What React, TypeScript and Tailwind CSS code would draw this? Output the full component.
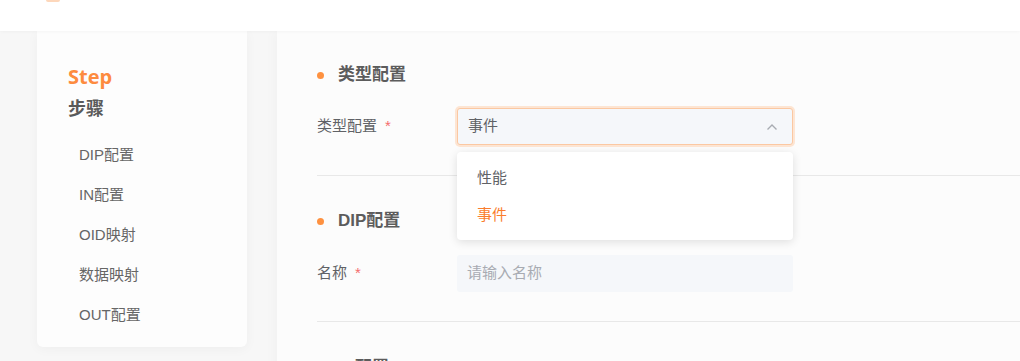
import React from 'react'

const steps = ['DIP配置', 'IN配置', 'OID映射', '数据映射', 'OUT配置']

function SectionTitle({ title }: { title: string }) {
  return (
    <div className="flex h-[22px] items-center gap-[14px]">
      <span className="h-[7px] w-[7px] rounded-full bg-[#fe9140]" />
      <span className="text-[17px] leading-[22px] font-bold text-[#5c5c5c]">{title}</span>
    </div>
  )
}

function FieldLabel({ text }: { text: string }) {
  return (
    <div className="flex w-[140px] items-center text-[15px] text-[#606266]">
      {text}
      <span className="ml-[8px] text-[#f56c6c]">*</span>
    </div>
  )
}

export default function App() {
  return (
    <div
      className="flex h-[361px] w-[1020px] flex-col overflow-hidden bg-[#f7f7f7]"
      style={{ fontFamily: '"Liberation Sans", "Noto Sans CJK SC", sans-serif' }}
    >
      {/* 顶部 */}
      <header className="relative z-10 h-[31px] shrink-0 bg-white pl-[46px] shadow-[0_1px_3px_rgba(0,0,0,0.03)]">
        <div className="h-[2px] w-[14px] rounded-b-full bg-[#fdd7bb]" />
      </header>

      <div className="flex flex-1 pl-[37px]">
        {/* 步骤 */}
        <aside className="h-[316px] w-[210px] shrink-0 rounded-b-md bg-[#fdfdfd] pt-[34px] pl-[31px] shadow-[0_2px_12px_rgba(0,0,0,0.04)]">
          <div
            className="text-[20px] leading-[24px] font-bold text-[#fd8b3f]"
            style={{ fontFamily: '"Open Sans", sans-serif' }}
          >
            Step
          </div>
          <div className="mt-[9px] text-[18px] leading-[22px] font-bold text-[#5a5a5a]">步骤</div>
          <ul className="mt-[15px]">
            {steps.map((s) => (
              <li key={s} className="h-[40px] pl-[11px] text-[15px] leading-[40px] text-[#666666]">
                {s}
              </li>
            ))}
          </ul>
        </aside>

        {/* 表单 */}
        <main className="ml-[30px] flex-1 bg-[#fcfcfc] pt-[33px] pl-[40px] shadow-[-4px_0_10px_rgba(0,0,0,0.025)]">
          <SectionTitle title="类型配置" />
          <div className="mt-[22px] flex h-[37px]">
            <FieldLabel text="类型配置" />
            <div className="relative w-[336px]">
              <div className="flex h-[37px] items-center justify-between rounded-[3px] border border-[#fbc8a2] bg-[#f5f7fa] pr-[14px] pl-[10px] ring-2 ring-[#fde5d3]">
                <span className="text-[15px] text-[#606266]">事件</span>
                <svg width="12" height="8" viewBox="0 0 12 8" fill="none">
                  <polyline points="1.5,6.5 6,2 10.5,6.5" stroke="#a8abb2" strokeWidth="1.4" />
                </svg>
              </div>
              <div className="absolute top-[44px] left-0 z-20 w-[336px] rounded-[4px] bg-white py-[7px] shadow-[0_2px_10px_rgba(0,0,0,0.12)]">
                <div className="h-[37px] px-[20px] text-[15px] leading-[37px] text-[#606266]">性能</div>
                <div className="h-[37px] px-[20px] text-[15px] leading-[37px] text-[#fa7d2c]">事件</div>
              </div>
            </div>
          </div>
          <div className="mt-[30px] h-px bg-[#e8e8e8]" />

          <div className="mt-[34px]">
            <SectionTitle title="DIP配置" />
          </div>
          <div className="mt-[23px] flex h-[37px]">
            <FieldLabel text="名称" />
            <div className="flex w-[336px] items-center rounded-[3px] bg-[#f5f7fa] px-[10px] text-[15px] text-[#a8abb2]">
              请输入名称
            </div>
          </div>
          <div className="mt-[29px] h-px bg-[#e8e8e8]" />

          <div className="mt-[35px]">
            <SectionTitle title="IN配置" />
          </div>
        </main>
      </div>
    </div>
  )
}
